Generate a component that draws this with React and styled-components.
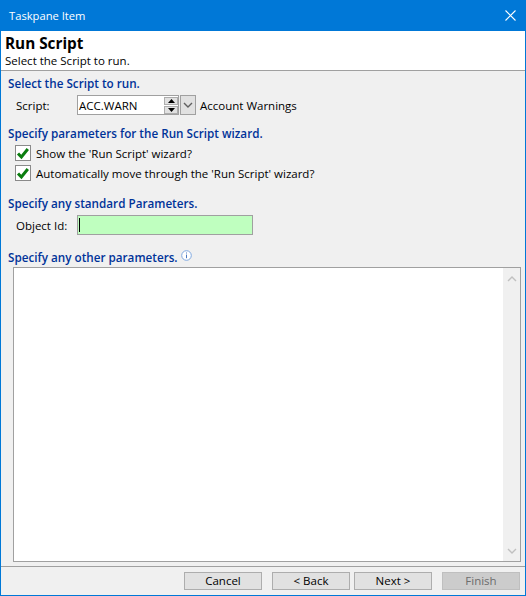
import React from 'react'
import styled, { createGlobalStyle } from 'styled-components'

const GlobalStyle = createGlobalStyle`
  html, body {
    margin: 0;
    padding: 0;
    background: #0078d7;
  }
  * { box-sizing: border-box; }
`

const Window = styled.div`
  width: 526px;
  height: 596px;
  display: flex;
  flex-direction: column;
  background: #f0f0f0;
  border: 1px solid #0078d7;
  font-family: "Open Sans", "Noto Sans", sans-serif;
  font-size: 11.5px;
  color: #000;
  overflow: hidden;
`

const TitleBar = styled.div`
  height: 30px;
  flex: none;
  display: flex;
  align-items: center;
  justify-content: space-between;
  background: #0078d7;
  color: #fff;
  font-size: 11.2px;
  padding: 0 9px 2px 8px;
`

const Header = styled.div`
  height: 40px;
  flex: none;
  background: #fff;
  border-bottom: 1px solid #a0a0a0;
  padding-left: 4px;
  display: flex;
  flex-direction: column;
`

const HeaderTitle = styled.div`
  font-size: 15.3px;
  font-weight: 700;
  line-height: 20px;
  padding-top: 2px;
  height: 22px;
`

const HeaderSub = styled.div`
  line-height: 16px;
`

const Body = styled.div`
  flex: 1;
  display: flex;
  flex-direction: column;
  padding: 4px 4px 0 7px;
  min-height: 0;
`

const SectionTitle = styled.div`
  color: #003399;
  font-size: 11.7px;
  font-weight: 600;
  line-height: 16px;
  height: 16px;
  margin-top: ${p => p.$top || 0}px;
  display: flex;
  align-items: center;
  gap: 3px;
`

const FieldRow = styled.div`
  display: flex;
  align-items: center;
  height: 20px;
  margin-top: ${p => p.$top || 0}px;
  padding-left: 8px;
`

const FieldLabel = styled.label`
  width: 61px;
  flex: none;
`

const ScriptBox = styled.div`
  width: 102px;
  height: 20px;
  display: flex;
  align-items: center;
  justify-content: space-between;
  background: #fff;
  border: 1px solid #a0a0a0;
  padding: 0 0 0 1px;
`

const Spinner = styled.div`
  display: flex;
  flex-direction: column;
  gap: 1px;
`

const SpinButton = styled.div`
  width: 14px;
  height: 8px;
  background: #e1e1e1;
  border: 1px solid #adadad;
  display: flex;
  align-items: center;
  justify-content: center;
`

const DropButton = styled.div`
  width: 16px;
  height: 20px;
  margin-left: 1px;
  background: #e1e1e1;
  border: 1px solid #a0a0a0;
  display: flex;
  align-items: center;
  justify-content: center;
`

const ScriptName = styled.span`
  margin-left: 4px;
`

const CheckRow = styled.div`
  display: flex;
  align-items: center;
  gap: 5px;
  height: 20px;
  padding-left: 7px;
  margin-top: ${p => p.$top || 0}px;
`

const CheckBox = styled.div`
  width: 16px;
  height: 16px;
  flex: none;
  background: #fff;
  border: 1px solid #8a8a8a;
  display: flex;
  align-items: center;
  justify-content: center;
`

const IdInput = styled.div`
  width: 176px;
  height: 20px;
  background: #bfffbf;
  border: 1px solid #a0a0a0;
  display: flex;
  align-items: center;
  padding-left: 1px;
`

const Caret = styled.div`
  width: 1px;
  height: 14px;
  background: #000;
`

const ScriptArea = styled.div`
  width: 508px;
  height: 295px;
  margin: 2px 0 0 5px;
  background: #fff;
  border: 1px solid #a0a0a0;
  display: flex;
  justify-content: flex-end;
`

const ScrollTrack = styled.div`
  width: 17px;
  height: 100%;
  background: #f0f0f0;
  display: flex;
  flex-direction: column;
  justify-content: space-between;
  align-items: center;
  padding: 7px 0 6px;
`

const InfoMark = styled.span`
  display: flex;
  margin-top: -3px;
`

const Footer = styled.div`
  height: 29px;
  flex: none;
  margin-top: 4px;
  border-top: 1px solid #a0a0a0;
  display: flex;
  justify-content: flex-end;
  padding: 5px 5px 0 0;
`

const WizardButton = styled.div`
  width: 78px;
  height: 18px;
  margin-left: ${p => p.$gap || 0}px;
  padding-bottom: 1px;
  display: flex;
  align-items: center;
  justify-content: center;
  background: ${p => (p.$disabled ? '#cccccc' : '#e1e1e1')};
  border: 1px solid ${p => (p.$disabled ? '#bfbfbf' : '#adadad')};
  color: ${p => (p.$disabled ? '#6d6d6d' : '#000')};
`

const Tick = () => (
  <svg width="14" height="14" viewBox="0 0 14 14">
    <path d="M2 7.5 L5.4 11 L11.8 3" fill="none" stroke="#0b7d0f" strokeWidth="3" />
  </svg>
)

const Chevron = ({ up, color, size = 10 }) => (
  <svg width={size} height={size * 0.7} viewBox="0 0 10 7">
    <path d={up ? 'M1 6 L5 2 L9 6' : 'M1 1 L5 5 L9 1'} fill="none" stroke={color} strokeWidth="1.4" />
  </svg>
)

const Arrow = ({ up }) => (
  <svg width="7" height="4" viewBox="0 0 7 4">
    <path d={up ? 'M3.5 0 L7 4 L0 4 Z' : 'M0 0 L7 0 L3.5 4 Z'} fill="#000" />
  </svg>
)

const InfoIcon = () => (
  <svg width="11" height="11" viewBox="0 0 11 11">
    <circle cx="5.5" cy="5.5" r="4.8" fill="#fff" stroke="#7fa8e0" />
    <path d="M5.5 2.5 V3.5 M5.5 4.6 V8.2" stroke="#4a78c0" strokeWidth="1" />
  </svg>
)

const CloseIcon = () => (
  <svg width="11" height="11" viewBox="0 0 11 11">
    <path d="M0.5 0.5 L10.5 10.5 M10.5 0.5 L0.5 10.5" stroke="#fff" strokeWidth="1.1" />
  </svg>
)

export default function App() {
  return (
    <>
      <GlobalStyle />
      <Window>
        <TitleBar>
          <span>Taskpane Item</span>
          <CloseIcon />
        </TitleBar>
        <Header>
          <HeaderTitle>Run Script</HeaderTitle>
          <HeaderSub>Select the Script to run.</HeaderSub>
        </Header>
        <Body>
          <SectionTitle>Select the Script to run.</SectionTitle>
          <FieldRow $top={4}>
            <FieldLabel>Script:</FieldLabel>
            <ScriptBox>
              <span>ACC.WARN</span>
              <Spinner>
                <SpinButton><Arrow up /></SpinButton>
                <SpinButton><Arrow /></SpinButton>
              </Spinner>
            </ScriptBox>
            <DropButton><Chevron color="#606060" /></DropButton>
            <ScriptName>Account Warnings</ScriptName>
          </FieldRow>
          <SectionTitle $top={10}>Specify parameters for the Run Script wizard.</SectionTitle>
          <CheckRow $top={2}>
            <CheckBox><Tick /></CheckBox>
            <span>Show the 'Run Script' wizard?</span>
          </CheckRow>
          <CheckRow>
            <CheckBox><Tick /></CheckBox>
            <span>Automatically move through the 'Run Script' wizard?</span>
          </CheckRow>
          <SectionTitle $top={12}>Specify any standard Parameters.</SectionTitle>
          <FieldRow $top={4}>
            <FieldLabel>Object Id:</FieldLabel>
            <IdInput><Caret /></IdInput>
          </FieldRow>
          <SectionTitle $top={14}>
            Specify any other parameters.
            <InfoMark><InfoIcon /></InfoMark>
          </SectionTitle>
          <ScriptArea>
            <ScrollTrack>
              <Chevron up color="#c0c0c0" />
              <Chevron color="#c0c0c0" />
            </ScrollTrack>
          </ScriptArea>
        </Body>
        <Footer>
          <WizardButton>Cancel</WizardButton>
          <WizardButton $gap={10}>&lt; Back</WizardButton>
          <WizardButton $gap={4}>Next &gt;</WizardButton>
          <WizardButton $gap={10} $disabled>Finish</WizardButton>
        </Footer>
      </Window>
    </>
  )
}
